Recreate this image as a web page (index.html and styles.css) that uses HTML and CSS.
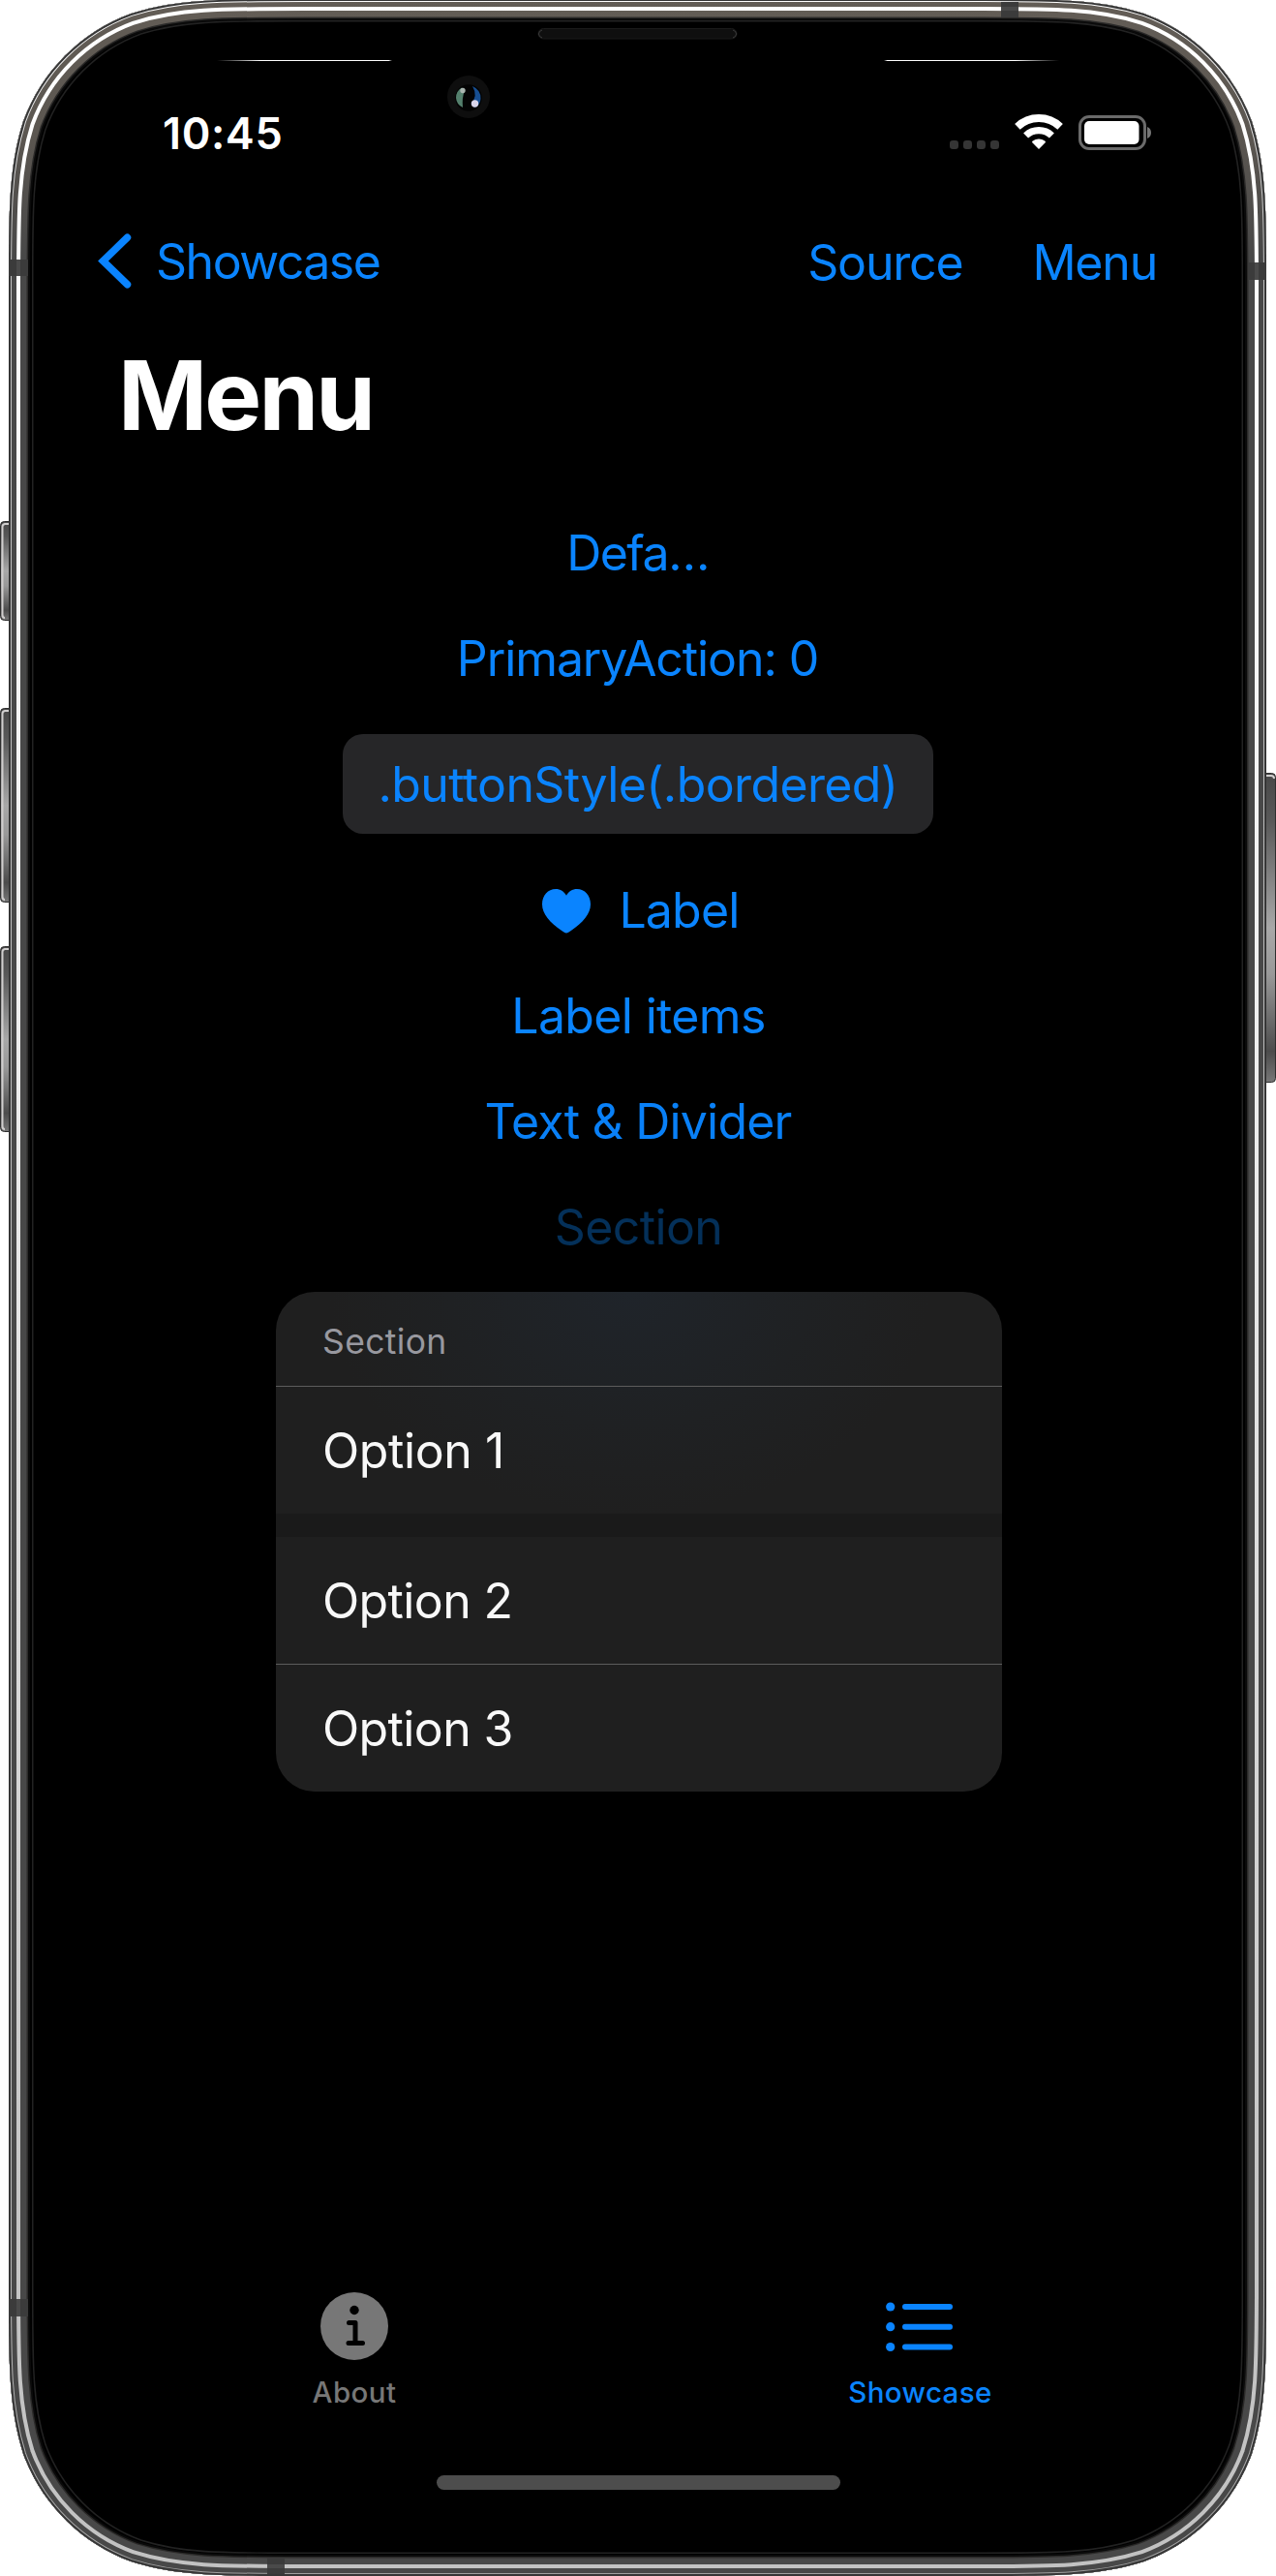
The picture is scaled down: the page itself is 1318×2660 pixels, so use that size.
FILE: index.html
```
<!DOCTYPE html>
<html lang="en">
<head>
<meta charset="utf-8">
<title>Menu</title>
<link rel="stylesheet" href="styles.css">
</head>
<body>
<div class="phone">
  <svg class="frame" viewBox="0 0 1318 2660" aria-hidden="true">
    <defs>
      <path id="body" d="M314.7,-1 C226.7,-1 182.7,-1 135.3,14 C83.6,32.8 42.8,73.6 24,125.3 C9,172.7 9,216.7 9,304.7 L9,2354.3 C9,2442.3 9,2486.3 24,2533.7 C42.8,2585.4 83.6,2626.2 135.3,2645 C182.7,2660 226.7,2660 314.7,2660 L1002.3,2660 C1090.3,2660 1134.3,2660 1181.7,2645 C1233.4,2626.2 1274.2,2585.4 1293,2533.7 C1308,2486.3 1308,2442.3 1308,2354.3 L1308,304.7 C1308,216.7 1308,172.7 1293,125.3 C1274.2,73.6 1233.4,32.8 1181.7,14 C1134.3,-1 1090.3,-1 1002.3,-1 Z"/>
      <path id="glass" d="M305.1,21 C226.8,21 187.6,21 145.4,34.3 C99.4,51.1 63.1,87.4 46.3,133.4 C33,175.6 33,214.8 33,293.1 L33,2364.9 C33,2443.2 33,2482.4 46.3,2524.6 C63.1,2570.6 99.4,2606.9 145.4,2623.7 C187.6,2637 226.8,2637 305.1,2637 L1011.9,2637 C1090.2,2637 1129.4,2637 1171.6,2623.7 C1217.6,2606.9 1253.9,2570.6 1270.7,2524.6 C1284,2482.4 1284,2443.2 1284,2364.9 L1284,293.1 C1284,214.8 1284,175.6 1270.7,133.4 C1253.9,87.4 1217.6,51.1 1171.6,34.3 C1129.4,21 1090.2,21 1011.9,21 Z"/>
      <clipPath id="bodyClip"><use href="#body"/></clipPath>
      <clipPath id="glassClip"><use href="#glass"/></clipPath>
      <linearGradient id="steel" gradientUnits="userSpaceOnUse" x1="0" y1="0" x2="0" y2="2660">
        <stop offset="0" stop-color="#635d56"/><stop offset=".05" stop-color="#5c5751"/><stop offset=".1" stop-color="#484848"/><stop offset="1" stop-color="#484848"/>
      </linearGradient>
      <linearGradient id="shine" gradientUnits="userSpaceOnUse" x1="0" y1="0" x2="0" y2="2660">
        <stop offset="0" stop-color="#fff"/><stop offset=".2" stop-color="#fafafa"/><stop offset=".45" stop-color="#ebebeb"/><stop offset=".85" stop-color="#c6c6c6"/><stop offset="1" stop-color="#c2c2c2"/>
      </linearGradient>
      <linearGradient id="rim" gradientUnits="userSpaceOnUse" x1="0" y1="0" x2="0" y2="2660">
        <stop offset="0" stop-color="#fff"/><stop offset=".09" stop-color="#c4c4c4"/><stop offset=".9" stop-color="#b8b8b8"/><stop offset="1" stop-color="#a0a0a0"/>
      </linearGradient>
      <linearGradient id="key" x1="0" y1="0" x2="0" y2="1">
        <stop offset="0" stop-color="#484848"/><stop offset=".15" stop-color="#585858"/><stop offset=".5" stop-color="#a8a8a8"/><stop offset=".65" stop-color="#999"/><stop offset=".9" stop-color="#4c4c4c"/><stop offset="1" stop-color="#777"/>
      </linearGradient>
      <linearGradient id="glintL"><stop offset="0" stop-color="#fff" stop-opacity="0"/><stop offset=".25" stop-color="#fff"/><stop offset=".98" stop-color="#fff"/><stop offset="1" stop-color="#fff" stop-opacity="0"/></linearGradient>
      <linearGradient id="glintR"><stop offset="0" stop-color="#fff" stop-opacity="0"/><stop offset=".02" stop-color="#fff"/><stop offset=".75" stop-color="#fff"/><stop offset="1" stop-color="#fff" stop-opacity="0"/></linearGradient>
    </defs>
    <g class="keys">
      <rect x=".5" y="538.500" width="16" height="102" rx="4"/>
      <rect x=".5" y="731.500" width="16" height="200" rx="4"/>
      <rect x=".5" y="977.500" width="16" height="191" rx="4"/>
      <rect x="1300.500" y="798.500" width="17" height="319" rx="4"/>
    </g>
    <g class="key-light">
      <path d="M9,541 H5 Q2.500,541.500 2.500,544 V635 Q2.500,638 5,638"/>
      <path d="M9,734 H5 Q2.500,734.500 2.500,737 V926 Q2.500,929 5,929"/>
      <path d="M9,980 H5 Q2.500,980.500 2.500,983 V1163 Q2.500,1166 5,1166"/>
      <path d="M1308,801 H1313 Q1316,801 1316,804"/>
    </g>
    <g clip-path="url(#bodyClip)" fill="none">
      <use href="#body" fill="#000"/>
      <use href="#body" stroke="#0a0a0a" stroke-width="44"/>
      <use href="#body" stroke="#2b2a29" stroke-width="40"/>
      <use href="#body" stroke="url(#steel)" stroke-width="37"/>
      <use href="#body" stroke="url(#shine)" stroke-width="24"/>
      <use href="#body" stroke="url(#steel)" stroke-width="16"/>
      <use href="#body" stroke="url(#rim)" stroke-width="6"/>
      <use href="#body" stroke="#363636" stroke-width="4"/>
      <g fill="#3b3b3b">
        <rect x="9" y="268" width="20" height="17"/><rect x="9" y="2374" width="20" height="18"/>
        <rect x="1289" y="271" width="19" height="18"/><rect x="1034" y="2" width="18" height="16"/>
        <rect x="276" y="2641" width="18" height="17"/>
      </g>
      <g fill="#4a4a4a">
        <rect x="17" y="268" width="4" height="17"/><rect x="17" y="2374" width="4" height="18"/>
        <rect x="1296" y="271" width="4" height="18"/><rect x="1034" y="7" width="18" height="4"/>
        <rect x="276" y="2648" width="18" height="4"/>
      </g>
    </g>
    <use href="#glass" fill="#000" stroke="#222" stroke-width="3" clip-path="url(#glassClip)"/>
    <rect x="224" y="62" width="181" height="1" fill="url(#glintL)"/>
    <rect x="913" y="62" width="181" height="1" fill="url(#glintR)"/>
    <rect x="556" y="29.500" width="205" height="10.500" rx="5.250" fill="#0f0f0f" stroke="#1a1a1a"/>
    <path d="M560,31 Q556.500,32 556.500,35 T560,39 M757,31 Q760.500,32 760.500,35 T757,39" fill="none" stroke="#3c3c3c" stroke-width="1"/>
    <circle cx="484" cy="100" r="22" fill="#0e0e0e"/>
    <circle cx="484" cy="101" r="13.800" fill="#030303"/>
    <path d="M477,90.500 Q471,94 471,101 Q471.500,108 478,111 Q477,101 480,93 Z" fill="#54806d"/>
    <path d="M488,89 Q497,93 496.500,102 Q496,109 490,111 L486.500,107 Q494,99 488,89 Z" fill="#174f92"/>
    <circle cx="478" cy="93.500" r="2.700" fill="#a9b5af"/>
    <circle cx="490.500" cy="107" r="3.700" fill="#d9d5ea"/>
  </svg>

  <div class="screen">
    <header class="status">
      <span class="time">10:45</span>
      <svg class="status-icons" viewBox="0 0 212 45" aria-hidden="true">
        <g fill="#353535"><rect x="1" y="30" width="9" height="9" rx="3.200"/><rect x="15" y="30" width="9" height="9" rx="3.200"/><rect x="29" y="30" width="9" height="9" rx="3.200"/><rect x="43" y="30" width="9" height="9" rx="3.200"/></g>
        <g fill="none" stroke="#fff"><path stroke-width="8" d="M70.900,15.800 A32,32 0 0 1 115.100,15.800"/><path stroke-width="7.200" d="M79.600,25 A19.400,19.400 0 0 1 106.400,25"/></g>
        <path d="M93,39 L85.800,31.800 Q88.800,28.500 93,28.500 T100.200,31.800 Z" fill="#fff"/>
        <rect x="135.500" y="5.500" width="67" height="33" rx="9.500" fill="none" stroke="#6a6a6a" stroke-width="3"/>
        <rect x="140" y="10" width="56.500" height="24" rx="5" fill="#fff"/>
        <path d="M205,16 Q209,17.500 209,22 T205,28 Z" fill="#757575"/>
      </svg>
    </header>

    <nav class="nav">
      <a class="back">
        <svg class="chevron" viewBox="0 0 37 60" aria-hidden="true"><path d="M31.500,6.300 L6.500,30.500 L31.500,54.800"/></svg>
        <span>Showcase</span>
      </a>
      <div class="actions"><a>Source</a><a>Menu</a></div>
    </nav>

    <h1 class="title">Menu</h1>

    <main class="list">
      <a class="default">Defa…</a>
      <a class="primary">PrimaryAction: 0</a>
      <a class="bordered">.buttonStyle(.bordered)</a>
      <a class="label">
        <svg class="heart" viewBox="0 0 50 46" aria-hidden="true"><path d="M25,45.500 C23.800,45.500 22,44.300 20.500,43.300 C8,35 0,25.500 0,15.800 C0,6.500 6,0 14,0 C18.800,0 22.700,2.600 25,6.700 C27.300,2.600 31.200,0 36,0 C44,0 50,6.500 50,15.800 C50,25.500 42,35 29.500,43.300 C28,44.300 26.200,45.500 25,45.500 Z"/></svg>
        <span>Label</span>
      </a>
      <a class="items">Label items</a>
      <a class="divider">Text &amp; Divider</a>
      <a class="dimmed">Section</a>
    </main>

    <section class="menu">
      <div class="menu-head">Section</div>
      <div class="option one">Option 1</div>
      <div class="band"></div>
      <div class="option">Option 2</div>
      <div class="option ruled">Option 3</div>
    </section>

    <footer class="tabs">
      <a class="tab">
        <svg class="tab-icon" viewBox="0 0 70 92" aria-hidden="true"><circle cx="35" cy="42" r="35" fill="#777"/><circle cx="35" cy="25.500" r="4.700"/><path d="M29.500,38.500 H36 V59.500 M29,59.500 H43.500" fill="none" stroke="#000" stroke-width="5" stroke-linecap="round" stroke-linejoin="round"/></svg>
        <span class="about">About</span>
      </a>
      <a class="tab active">
        <svg class="tab-icon" viewBox="0 0 70 92" aria-hidden="true"><g fill="#0a84ff"><circle cx="4.700" cy="22" r="4.600"/><circle cx="4.700" cy="42.700" r="4.600"/><circle cx="4.700" cy="63.500" r="4.600"/><rect x="17" y="19" width="52" height="6" rx="3"/><rect x="17" y="39.700" width="52" height="6" rx="3"/><rect x="17" y="60.500" width="52" height="6" rx="3"/></g></svg>
        <span>Showcase</span>
      </a>
    </footer>
    <div class="home"></div>
  </div>
</div>
</body>
</html>
```
FILE: styles.css
```
* { box-sizing: border-box; }
body { margin: 0; background: #fff; font-family: Inter, "Liberation Sans", sans-serif; }
.phone { position: relative; width: 1318px; height: 2660px; overflow: hidden; }
.frame { position: absolute; inset: 0; width: 1318px; height: 2660px; }
.keys rect { fill: url(#key); stroke: #2e2e2e; stroke-width: 1; }
.key-light path { fill: none; stroke: #d0cece; stroke-width: 2; }

.screen { position: relative; display: flex; flex-direction: column; height: 2660px; padding-top: 107px; font-size: 50px; line-height: 61px; color: #0a84ff; white-space: nowrap; }
.status { display: flex; justify-content: space-between; align-items: flex-start; height: 132px; padding: 0 126px 0 167px; }
.time { padding-left: 1px; color: #fff; font-size: 45px; font-weight: 600; line-height: 61px; letter-spacing: .6px; }
.status-icons { width: 212px; height: 45px; margin-top: 8px; }

.nav { display: flex; justify-content: space-between; height: 61px; padding: 0 123px 0 100px; }
.back { display: flex; gap: 24px; letter-spacing: -1.5px; }
.back span { padding-top: 1px; }
.chevron { width: 37px; height: 60px; }
.chevron path { fill: none; stroke: #0a84ff; stroke-width: 7.5; stroke-linecap: round; stroke-linejoin: miter; }
.actions { display: flex; gap: 72px; padding-top: 2px; letter-spacing: -1.2px; }

.title { margin: 48px 0 0 122px; color: #fff; font-size: 99px; font-weight: 700; line-height: 120px; letter-spacing: -2.9px; }

.list { display: flex; flex-direction: column; align-items: center; gap: 48px; margin-top: 73px; }
.default { padding-right: 1px; letter-spacing: -1.5px; }
.primary { padding-right: 1px; letter-spacing: -1.1px; }
.bordered { width: 610px; margin: -1px 0; padding: 22px 0 20px; border-radius: 21px; background: #262628; text-align: center; letter-spacing: -.62px; }
.bordered + a { margin-top: 2px; }
.label { display: flex; gap: 29px; padding-left: 6px; letter-spacing: -.8px; }
.heart { width: 50px; height: 46px; margin-top: 8px; fill: #0a84ff; }
.items { padding-left: 1px; letter-spacing: -.65px; }
.divider { letter-spacing: -.8px; color: #0980f7; }
.dimmed { padding-left: 1px; letter-spacing: -.6px; color: #043059; }

.menu { width: 750px; margin: 36px auto 0 285px; border-radius: 40px; overflow: hidden; background: radial-gradient(ellipse 310px 230px at 365px 0, #1f242a, #1f2123 60%, #1f1f1f); color: #f8f8f8; }
.menu-head { height: 98px; padding: 3px 0 0 48px; border-bottom: 1px solid #5c5c5c; color: #98989f; font-size: 35.5px; line-height: 97px; letter-spacing: .35px; }
.option { height: 131px; padding: 1px 0 0 48px; line-height: 131px; letter-spacing: -.62px; }
.option.one { letter-spacing: -.4px; }
.option.ruled { height: 132px; border-top: 1px solid #5c5c5c; }
.band { height: 24px; background: #1a1a1a; }

.tabs { display: grid; grid-template-columns: 584px 584px; margin: 510px 0 0 74px; }
.tab { display: flex; flex-direction: column; align-items: center; color: #777; font-size: 29.5px; font-weight: 500; line-height: 36px; letter-spacing: .4px; }
.about { letter-spacing: .4px; }
.tab.active { color: #0a84ff; }
.tab.active span { padding-left: 1px; }
.tab-icon { width: 70px; height: 92px; }
.home { width: 417px; height: 15px; margin: 68px 0 0 451px; border-radius: 8px; background: #4d4d4d; }
```
